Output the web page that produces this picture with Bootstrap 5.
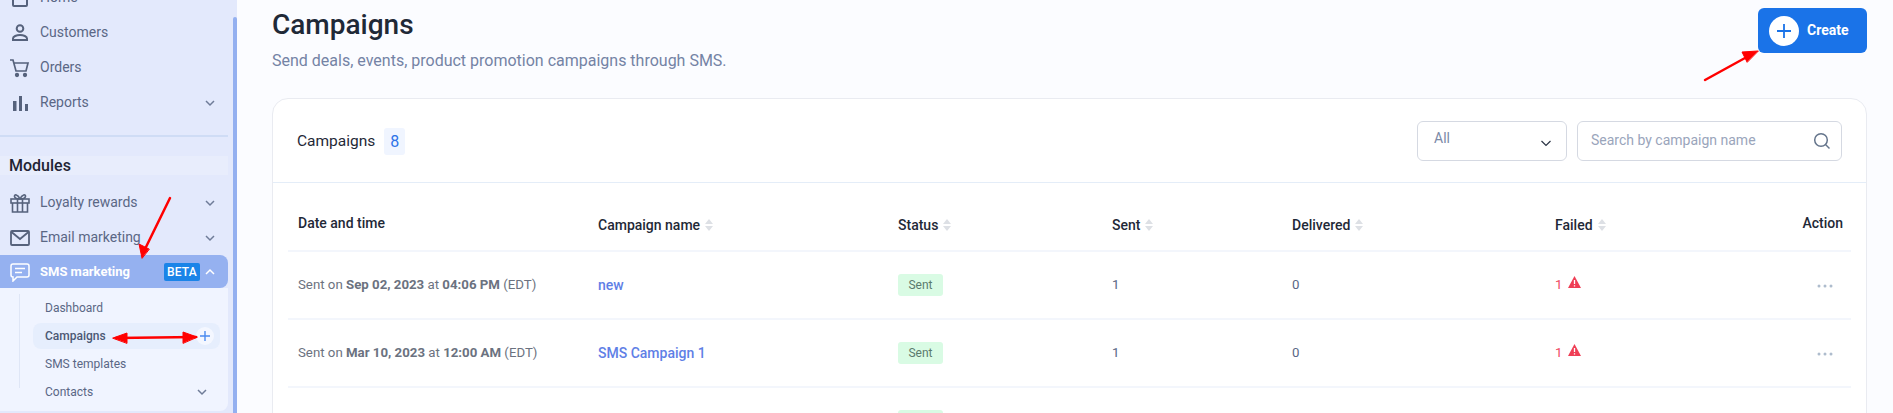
<!DOCTYPE html>
<html lang="en">
<head>
<meta charset="utf-8">
<title>Campaigns</title>
<link href="https://cdn.jsdelivr.net/npm/bootstrap@5.3.0/dist/css/bootstrap.min.css" rel="stylesheet">
<style>
html,body{height:413px;overflow:hidden}
body{font-family:Roboto,"Liberation Sans",sans-serif;background:#fbfcff;color:#1f2937;font-size:14px}
.shell{height:413px;position:relative;overflow:hidden}
.side{width:237px;flex:none;background:#e3e9fc;height:413px;overflow:hidden;position:relative}
.side-in{width:228px;margin-top:-20px}
.sitem{height:35px;padding-left:10px;color:#5a6785;font-size:14px}
.sitem svg.ic{width:20px;height:20px;margin-right:10px;flex:none}
.chev{width:12px;height:12px;margin-left:auto;margin-right:12px;flex:none}
.sline{height:2px;background:#cfdcf5;margin-top:15px}
.modband{height:19px;margin-top:19px;margin-bottom:10px;padding-left:9px;background:#e8edfc;font-weight:500;font-size:16px;color:#1f2433;line-height:19px}
.sactive{height:33px;padding-left:10px;background:#95b1f0;border-radius:0 8px 8px 0;color:#fff;font-weight:700;font-size:13px}
.sactive svg.ic{width:20px;height:20px;margin-right:10px;flex:none}
.betatag{background:#1a84e8;color:#fff;font-size:12px;font-weight:500;border-radius:2px;padding:0 3px;height:18px;line-height:18px;margin-left:auto;letter-spacing:.2px}
.subwrap{background:#f0f4ff;border-radius:0 0 8px 0;height:123px;padding:14px 8px 0 19px}
.sublist{border-left:1px solid #dfe6f6;height:94px;padding-left:13px}
.subitem{height:28px;font-size:12px;color:#5a6785;padding-left:12px;padding-right:0}
.subitem:first-child{margin-top:-8px}
.subitem.on{height:26px;margin:1px 0;background:#e6eefd;border-radius:8px;color:#4c5874;font-weight:500;padding-right:6px}
.plusdot{width:18px;height:18px;background:#f4f7ff;border-radius:50%;margin-left:auto}
.sbar{position:absolute;right:0;top:17px;bottom:0;width:4px;background:#94b0f0;border-radius:2px 2px 0 0}
.mainp{flex:1;padding:8px 26px 0 36px;min-width:0}
.ptitle{font-size:28px;font-weight:500;line-height:33px;color:#1f2937;margin:0 0 0 -1px}
.psub{font-size:16px;color:#7483a5;margin:10px 0 0 -1px;line-height:19px}
.createbtn{width:109px;height:45px;background:#1a73e8;border:0;border-radius:6px;color:#fff;font-weight:700;font-size:14px;padding:0 0 0 11px}
.pcircle{width:30px;height:30px;background:#fff;border-radius:50%;margin-right:8px}
.ccard{border:1px solid #e9ebf1;border-radius:16px;background:#fff;margin:28px 0 0 -1px;height:400px;overflow:hidden}
.chead{height:84px;border-bottom:1px solid #e4edf8;padding:0 24px}
.cname{font-size:15.500px;color:#1f2937;margin-right:9px;padding-top:2px}
.ccount{width:21px;height:27px;background:#f0f5ff;color:#2f73e8;font-size:16px;border-radius:3px;margin-top:2px}
.fsel{width:150px;height:40px;border:1px solid #d5d9e2;border-radius:6px;padding:0 14px 4px 16px;color:#7b8aa8;margin-right:10px}
.fsearch{width:265px;height:40px;border:1px solid #d5d9e2;border-radius:6px;padding:0 10px 0 13px;color:#9aa5bb}
.tblwrap{padding:0 14px 0 15px}
.dtable{width:1563px;table-layout:fixed;border-collapse:collapse}
.dtable th{height:68px;font-weight:500;font-size:14px;color:#1f2937;border-bottom:2px solid #f3f6fc;padding:18px 0 0 10px;vertical-align:middle}
.dtable th.upper{padding-top:14px}
.dtable td{height:68px;font-size:13.250px;color:#6b7280;border-bottom:2px solid #f3f6fc;padding:0 0 0 10px;vertical-align:middle}
.sortic{width:8px;height:12px;margin-left:5px;vertical-align:-1px}
.dtable a{color:#5f7fe6;text-decoration:none;font-weight:500;font-size:14px}
.sentpill{display:inline-block;background:#d9fbe4;color:#5a7a6d;font-size:12px;border-radius:3px;width:45px;height:22px;line-height:22px;text-align:center}
.dtable td.numc{color:#5a6785}
.dtable td.failc{color:#ef4a5f}
.warnic{margin-left:2px;vertical-align:1px}
.dtable td.dots{color:#aebccd;text-align:right;padding-right:18px}
.arrows{position:absolute;left:0;top:0;width:1893px;height:413px;pointer-events:none}
</style>
</head>
<body>
<div class="shell d-flex">
  <aside class="side">
    <div class="side-in">
      <div class="sitem d-flex align-items-center">
        <svg class="ic" viewBox="0 0 20 20" fill="none" stroke="#56627c" stroke-width="2"><path d="M3 6v11a1 1 0 0 0 1 1h12a1 1 0 0 0 1-1V6M1 8l9-7 9 7"/></svg><span>Home</span>
      </div>
      <div class="sitem d-flex align-items-center">
        <svg class="ic" viewBox="0 0 20 20" fill="none" stroke="#56627c" stroke-width="2"><circle cx="10" cy="5.500" r="3.300"/><path d="M3 17v-1.500c0-2 3.500-3.500 7-3.500s7 1.500 7 3.500V17z"/></svg><span>Customers</span>
      </div>
      <div class="sitem d-flex align-items-center">
        <svg class="ic" viewBox="0 0 20 20" fill="none" stroke="#56627c" stroke-width="1.700"><path d="M0 2h3l3 11h10l2-8H4.200"/><circle cx="7" cy="17" r="1.300" fill="#56627c"/><circle cx="15" cy="17" r="1.300" fill="#56627c"/></svg><span>Orders</span>
      </div>
      <div class="sitem d-flex align-items-center">
        <svg class="ic" viewBox="0 0 20 20" fill="#56627c"><rect x="3" y="8" width="3.500" height="10"/><rect x="9" y="3" width="3" height="15"/><rect x="15" y="11" width="3" height="7"/></svg><span>Reports</span>
        <svg class="chev" viewBox="0 0 12 12" fill="none" stroke="#6f7c98" stroke-width="1.500"><path d="M2 4l4 4 4-4"/></svg>
      </div>
      <div class="sline"></div>
      <div class="modband">Modules</div>
      <div class="sitem d-flex align-items-center">
        <svg class="ic" viewBox="0 0 20 20" fill="none" stroke="#56627c" stroke-width="1.600"><rect x="1" y="6" width="18" height="4"/><path d="M2.500 10v9h15v-9M7.500 6v13M12.500 6v13M10 6C8 1 4 1 4.500 3.500 5 6 10 6 10 6zm0 0c2-5 6-5 5.500-2.500C15 6 10 6 10 6z"/></svg><span>Loyalty rewards</span>
        <svg class="chev" viewBox="0 0 12 12" fill="none" stroke="#6f7c98" stroke-width="1.500"><path d="M2 4l4 4 4-4"/></svg>
      </div>
      <div class="sitem d-flex align-items-center">
        <svg class="ic" viewBox="0 0 20 20" fill="none" stroke="#56627c" stroke-width="1.800"><rect x="1" y="3" width="18" height="14" rx="1"/><path d="M1.500 4l8.500 7 8.500-7"/></svg><span>Email marketing</span>
        <svg class="chev" viewBox="0 0 12 12" fill="none" stroke="#6f7c98" stroke-width="1.500"><path d="M2 4l4 4 4-4"/></svg>
      </div>
      <div class="sactive d-flex align-items-center">
        <svg class="ic" viewBox="0 0 20 20" fill="none" stroke="#fff" stroke-width="1.500"><path d="M3 2h14a2 2 0 0 1 2 2v9a2 2 0 0 1-2 2H7l-4 4v-4a2 2 0 0 1-2-2V4a2 2 0 0 1 2-2zM5 6.500h10M5 10.500h7"/></svg><span>SMS marketing</span>
        <span class="betatag">BETA</span>
        <svg class="chev ms-1" viewBox="0 0 12 12" fill="none" stroke="#fff" stroke-width="1.500"><path d="M2 8l4-4 4 4"/></svg>
      </div>
      <div class="subwrap">
        <div class="sublist">
          <div class="subitem d-flex align-items-center">Dashboard</div>
          <div class="subitem on d-flex align-items-center">Campaigns
            <span class="plusdot d-flex align-items-center justify-content-center"><svg width="12" height="12" viewBox="0 0 12 12" stroke="#4a8af0" stroke-width="1.400"><path d="M6 1v10M1 6h10"/></svg></span>
          </div>
          <div class="subitem d-flex align-items-center">SMS templates</div>
          <div class="subitem d-flex align-items-center">Contacts
            <svg class="chev ms-auto" viewBox="0 0 12 12" fill="none" stroke="#6f7c98" stroke-width="1.500"><path d="M2 4l4 4 4-4"/></svg>
          </div>
        </div>
      </div>
    </div>
    <div class="sbar"></div>
  </aside>
  <main class="mainp">
    <div class="d-flex justify-content-between align-items-start">
      <div>
        <h1 class="ptitle">Campaigns</h1>
        <p class="psub">Send deals, events, product promotion campaigns through SMS.</p>
      </div>
      <button class="createbtn d-flex align-items-center" type="button">
        <span class="pcircle d-flex align-items-center justify-content-center"><svg width="16" height="16" viewBox="0 0 16 16" stroke="#1a73e8" stroke-width="1.800"><path d="M8 1v14M1 8h14"/></svg></span>Create
      </button>
    </div>
    <section class="ccard">
      <div class="chead d-flex align-items-center">
        <span class="cname">Campaigns</span>
        <span class="ccount d-flex align-items-center justify-content-center">8</span>
        <div class="fsel d-flex align-items-center justify-content-between ms-auto">
          <span>All</span>
          <svg width="12" height="12" viewBox="0 0 12 12" fill="none" stroke="#2b3445" stroke-width="1.200" class="mt-2"><path d="M1.500 4l4.500 4.500L10.500 4"/></svg>
        </div>
        <div class="fsearch d-flex align-items-center justify-content-between">
          <span>Search by campaign name</span>
          <svg width="18" height="18" viewBox="0 0 18 18" fill="none" stroke="#64748b" stroke-width="1.500"><circle cx="8" cy="8" r="6.300"/><path d="M12.500 12.500l4 4"/></svg>
        </div>
      </div>
      <div class="tblwrap">
        <table class="dtable">
          <colgroup><col style="width:300px"><col style="width:300px"><col style="width:214px"><col style="width:180px"><col style="width:263px"><col style="width:196px"><col style="width:110px"></colgroup>
          <thead>
            <tr>
              <th class="upper">Date and time</th>
              <th>Campaign name<svg class="sortic" viewBox="0 0 8 12" fill="#dde0e5"><path d="M4 0l4 5H0zM4 12l4-5H0z"/></svg></th>
              <th>Status<svg class="sortic" viewBox="0 0 8 12" fill="#dde0e5"><path d="M4 0l4 5H0zM4 12l4-5H0z"/></svg></th>
              <th>Sent<svg class="sortic" viewBox="0 0 8 12" fill="#dde0e5"><path d="M4 0l4 5H0zM4 12l4-5H0z"/></svg></th>
              <th>Delivered<svg class="sortic" viewBox="0 0 8 12" fill="#dde0e5"><path d="M4 0l4 5H0zM4 12l4-5H0z"/></svg></th>
              <th>Failed<svg class="sortic" viewBox="0 0 8 12" fill="#dde0e5"><path d="M4 0l4 5H0zM4 12l4-5H0z"/></svg></th>
              <th class="upper text-end pe-2">Action</th>
            </tr>
          </thead>
          <tbody>
            <tr>
              <td>Sent on <b>Sep 02, 2023</b> at <b>04:06 PM</b> (EDT)</td>
              <td><a href="#">new</a></td>
              <td><span class="sentpill">Sent</span></td>
              <td class="numc">1</td><td class="numc">0</td>
              <td class="failc">1 <svg class="warnic" width="13" height="12" viewBox="0 0 13 12"><path d="M6.500 0L13 12H0z" fill="#ef3e55"/><path d="M6.500 4v4M6.500 9.200v1.200" stroke="#fff" stroke-width="1.300"/></svg></td>
              <td class="dots"><svg width="16" height="4" viewBox="0 0 16 4" fill="#aebccd"><circle cx="2" cy="2" r="1.500"/><circle cx="8" cy="2" r="1.500"/><circle cx="14" cy="2" r="1.500"/></svg></td>
            </tr>
            <tr>
              <td>Sent on <b>Mar 10, 2023</b> at <b>12:00 AM</b> (EDT)</td>
              <td><a href="#">SMS Campaign 1</a></td>
              <td><span class="sentpill">Sent</span></td>
              <td class="numc">1</td><td class="numc">0</td>
              <td class="failc">1 <svg class="warnic" width="13" height="12" viewBox="0 0 13 12"><path d="M6.500 0L13 12H0z" fill="#ef3e55"/><path d="M6.500 4v4M6.500 9.200v1.200" stroke="#fff" stroke-width="1.300"/></svg></td>
              <td class="dots"><svg width="16" height="4" viewBox="0 0 16 4" fill="#aebccd"><circle cx="2" cy="2" r="1.500"/><circle cx="8" cy="2" r="1.500"/><circle cx="14" cy="2" r="1.500"/></svg></td>
            </tr>
            <tr>
              <td></td><td></td>
              <td><span class="sentpill">Sent</span></td>
              <td></td><td></td><td></td><td></td>
            </tr>
          </tbody>
        </table>
      </div>
    </section>
  </main>
  <svg class="arrows" viewBox="0 0 1893 413" fill="#f00" stroke="#f00" stroke-linecap="round">
    <path d="M170 198L146 247" stroke-width="2.500" fill="none"/>
    <path d="M142 258l-3-14 10 5z" stroke-width="1"/>
    <path d="M116 338L196 337" stroke-width="2.500" fill="none"/>
    <path d="M113 338l14-5v10zM197 337l-14-5v11z" stroke-width="1"/>
    <path d="M1705 80L1745 58" stroke-width="2.500" fill="none"/>
    <path d="M1758 51l-16 1 5 10z" stroke-width="1"/>
  </svg>
</div>
</body>
</html>
